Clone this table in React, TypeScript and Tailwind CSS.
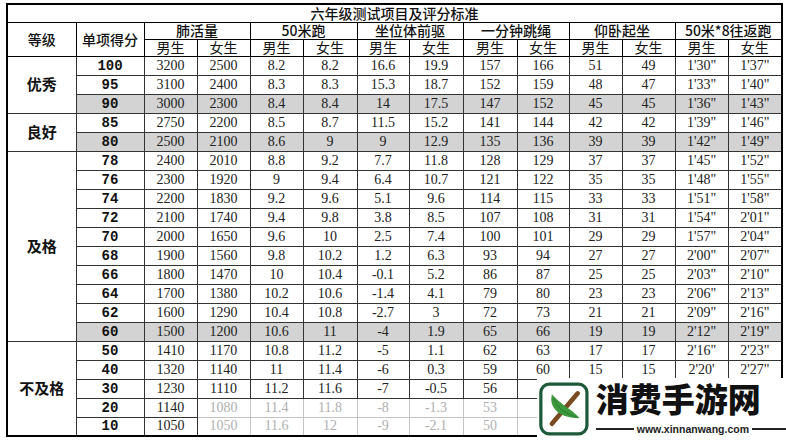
import React from 'react';

type Row = { score: string; shade?: boolean; cells: string[] };
type Group = { grade: string; rows: Row[] };

const groups: Group[] = [
  {
    grade: '优秀',
    rows: [
      { score: '100', cells: ['3200', '2500', '8.2', '8.2', '16.6', '19.9', '157', '166', '51', '49', '1\'30"', '1\'37"'] },
      { score: '95', cells: ['3100', '2400', '8.3', '8.3', '15.3', '18.7', '152', '159', '48', '47', '1\'33"', '1\'40"'] },
      { score: '90', shade: true, cells: ['3000', '2300', '8.4', '8.4', '14', '17.5', '147', '152', '45', '45', '1\'36"', '1\'43"'] },
    ],
  },
  {
    grade: '良好',
    rows: [
      { score: '85', cells: ['2750', '2200', '8.5', '8.7', '11.5', '15.2', '141', '144', '42', '42', '1\'39"', '1\'46"'] },
      { score: '80', shade: true, cells: ['2500', '2100', '8.6', '9', '9', '12.9', '135', '136', '39', '39', '1\'42"', '1\'49"'] },
    ],
  },
  {
    grade: '及格',
    rows: [
      { score: '78', cells: ['2400', '2010', '8.8', '9.2', '7.7', '11.8', '128', '129', '37', '37', '1\'45"', '1\'52"'] },
      { score: '76', cells: ['2300', '1920', '9', '9.4', '6.4', '10.7', '121', '122', '35', '35', '1\'48"', '1\'55"'] },
      { score: '74', cells: ['2200', '1830', '9.2', '9.6', '5.1', '9.6', '114', '115', '33', '33', '1\'51"', '1\'58"'] },
      { score: '72', cells: ['2100', '1740', '9.4', '9.8', '3.8', '8.5', '107', '108', '31', '31', '1\'54"', '2\'01"'] },
      { score: '70', cells: ['2000', '1650', '9.6', '10', '2.5', '7.4', '100', '101', '29', '29', '1\'57"', '2\'04"'] },
      { score: '68', cells: ['1900', '1560', '9.8', '10.2', '1.2', '6.3', '93', '94', '27', '27', '2\'00"', '2\'07"'] },
      { score: '66', cells: ['1800', '1470', '10', '10.4', '-0.1', '5.2', '86', '87', '25', '25', '2\'03"', '2\'10"'] },
      { score: '64', cells: ['1700', '1380', '10.2', '10.6', '-1.4', '4.1', '79', '80', '23', '23', '2\'06"', '2\'13"'] },
      { score: '62', cells: ['1600', '1290', '10.4', '10.8', '-2.7', '3', '72', '73', '21', '21', '2\'09"', '2\'16"'] },
      { score: '60', shade: true, cells: ['1500', '1200', '10.6', '11', '-4', '1.9', '65', '66', '19', '19', '2\'12"', '2\'19"'] },
    ],
  },
  {
    grade: '不及格',
    rows: [
      { score: '50', cells: ['1410', '1170', '10.8', '11.2', '-5', '1.1', '62', '63', '17', '17', '2\'16"', '2\'23"'] },
      { score: '40', cells: ['1320', '1140', '11', '11.4', '-6', '0.3', '59', '60', '15', '15', '2\'20\'', '2\'27"'] },
      // right-hand cells of the last three rows sit under the watermark
      { score: '30', cells: ['1230', '1110', '11.2', '11.6', '-7', '-0.5', '56', '', '', '', '', ''] },
      { score: '20', cells: ['1140', '1080', '11.4', '11.8', '-8', '-1.3', '53', '', '', '', '', ''] },
      { score: '10', cells: ['1050', '1050', '11.6', '12', '-9', '-2.1', '50', '', '', '', '', ''] },
    ],
  },
];

const items = ['肺活量', '50米跑', '坐位体前驱', '一分钟跳绳', '仰卧起坐', '50米*8往返跑'];
const widths = [69, 68, 53, 53, 53, 54, 52, 54, 54, 52, 53, 53, 53, 54];

const Logo: React.FC = () => (
  <svg width="54" height="58" viewBox="0 0 54 58">
    <rect x="2" y="2" width="50" height="54" rx="9" fill="#fff" stroke="#1e5a3a" strokeWidth="3.5" />
    <line x1="14" y1="45" x2="42" y2="12" stroke="#7a4a22" strokeWidth="5" strokeLinecap="round" />
    <path d="M14 13 C 10 29, 24 39, 44 39 C 36 29, 24 25, 14 13 Z" fill="#3c9a3e" />
    <path d="M16 17 C 20 29, 30 35, 42 38" stroke="#2b7a30" strokeWidth="1" fill="none" />
  </svg>
);

export default function App() {
  const cjk = "font-['Noto_Sans_CJK_SC','Noto_Sans',sans-serif]";
  const head = `border border-black text-center text-[14px] leading-[15px] ${cjk}`;
  return (
    <div className="relative w-[786px] h-[440px] overflow-hidden bg-white">
      <table className="ml-[6px] mt-[3px] w-[776px] table-fixed border-collapse border-2 border-black text-[#111]">
        <colgroup>
          {widths.map((w, i) => (
            <col key={i} style={{ width: w }} />
          ))}
        </colgroup>
        <tbody>
          <tr className="h-[18px]">
            <td colSpan={14} className={`${head} font-medium`}>
              六年级测试项目及评分标准
            </td>
          </tr>
          <tr className="h-[17px]">
            <td rowSpan={2} className={`${head} font-medium`}>等级</td>
            <td rowSpan={2} className={`${head} font-medium`}>单项得分</td>
            {items.map((t) => (
              <td key={t} colSpan={2} className={`${head} font-medium`}>
                {t}
              </td>
            ))}
          </tr>
          <tr className="h-[17px]">
            {items.flatMap((t) => [
              <td key={t + 'm'} className={head}>男生</td>,
              <td key={t + 'f'} className={head}>女生</td>,
            ])}
          </tr>
          {groups.map((g) =>
            g.rows.map((r, ri) => {
              const faded = r.score === '20' || r.score === '10';
              return (
                <tr key={r.score} className="h-[19px]">
                  {ri === 0 && (
                    <td rowSpan={g.rows.length} className={`border border-[#333] bg-white text-center text-[15px] font-bold ${cjk}`}>
                      {g.grade}
                    </td>
                  )}
                  <td
                    className={`border border-[#333] text-center text-[14px] leading-none font-bold font-['Liberation_Mono',monospace] ${
                      r.shade ? 'bg-[#d3d3d3]' : 'bg-white'
                    }`}
                  >
                    {r.score}
                  </td>
                  {r.cells.map((c, ci) => (
                    <td
                      key={ci}
                      className={`border text-center text-[14px] leading-none font-['Liberation_Serif',serif] ${
                        r.shade ? 'bg-[#d3d3d3]' : 'bg-white'
                      } ${faded && ci > 0 ? 'border-[#c4c4c4] text-[#b0b0b0]' : 'border-[#333] text-[#222]'}`}
                    >
                      {c}
                    </td>
                  ))}
                </tr>
              );
            })
          )}
        </tbody>
      </table>

      <div className="absolute left-[537px] top-[378px] flex h-[62px] w-[249px] items-start gap-[7px] bg-white pl-[2px] pt-[2px]">
        <Logo />
        <div className="flex flex-col pt-[2px]">
          <div className={`text-[33px] leading-[33px] font-black text-[#111] ${cjk}`}>消费手游网</div>
          <div className="mt-[9px] flex items-center gap-[3px]">
            <div className="h-[2px] w-[38px] bg-[#222]" />
            <span className="text-[10.5px] leading-none font-bold font-['Liberation_Sans',sans-serif] text-[#222]">
              www.xinnanwang.com
            </span>
            <div className="h-[2px] w-[34px] bg-[#222]" />
          </div>
        </div>
      </div>
    </div>
  );
}
